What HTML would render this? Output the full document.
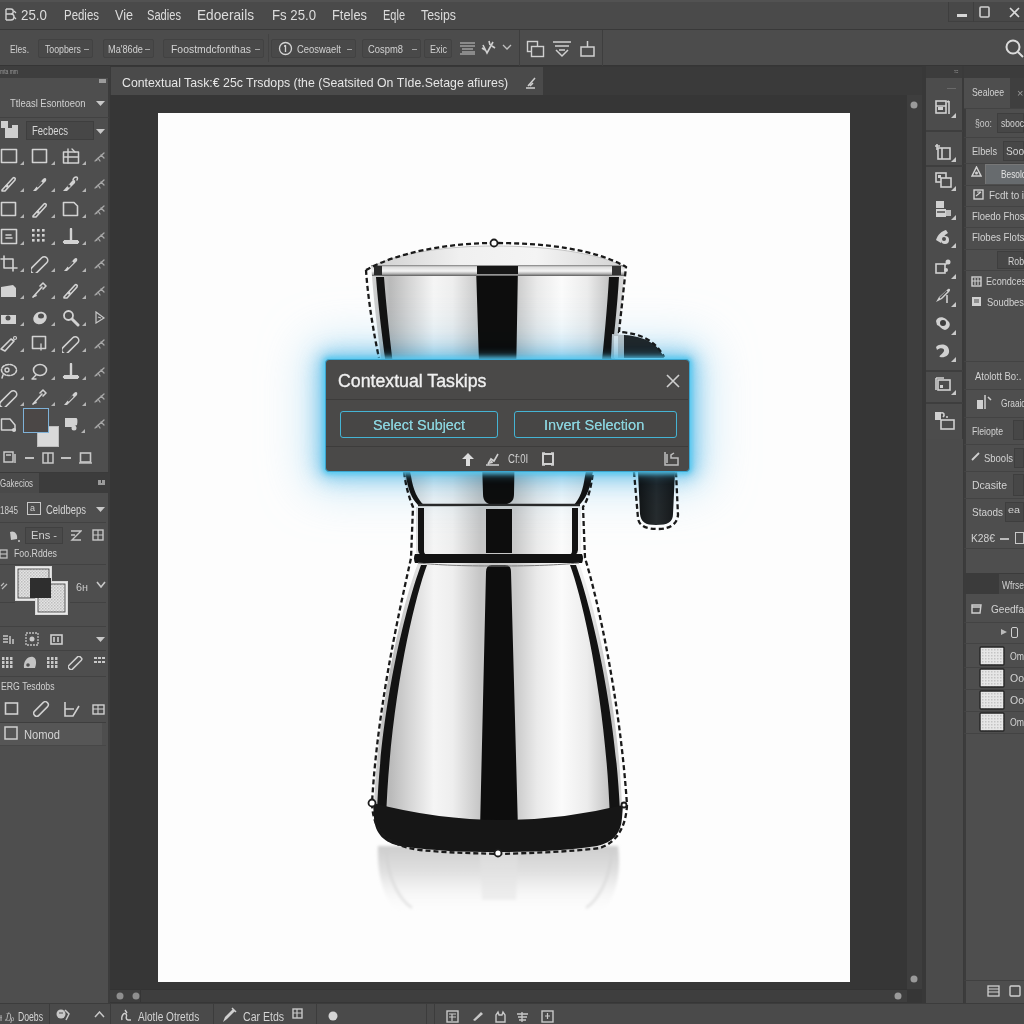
<!DOCTYPE html>
<html><head><meta charset="utf-8">
<style>

*{margin:0;padding:0;box-sizing:border-box}
html,body{width:1024px;height:1024px;overflow:hidden;background:#373737;font-family:"Liberation Sans",sans-serif;color:#dcdcdc}
.a{position:absolute}
.t{position:absolute;white-space:nowrap;line-height:1}
#menubar{left:0;top:0;width:1024px;height:30px;background:#4a4a4a;border-bottom:1px solid #393939}
#optbar{left:0;top:30px;width:1024px;height:36px;background:#4c4c4c;border-bottom:1px solid #353535}
#leftp{left:0;top:66px;width:110px;height:937px;background:#4e4e4e;border-right:2px solid #3c3c3c}
#tabbar{left:110px;top:67px;width:813px;height:28px;background:#3a3a3a}
#doctab{left:111px;top:67px;width:432px;height:28px;background:#4a4a4a}
#canvasarea{left:110px;top:95px;width:813px;height:908px;background:#363636}
#canvas{left:158px;top:113px;width:692px;height:869px;background:#fdfdfd;overflow:hidden}
#vscroll{left:907px;top:95px;width:15px;height:894px;background:#3e3e3e}
#hscroll{left:110px;top:989px;width:797px;height:13px;background:#3e3e3e;border-top:1px solid #333}
#iconcol{left:923px;top:66px;width:42px;height:937px;background:#3a3a3a}
#rightp{left:964px;top:66px;width:60px;height:937px;background:#4e4e4e;border-left:2px solid #3c3c3c}
#status{left:0;top:1003px;width:1024px;height:21px;background:#4a4a4a;border-top:1px solid #3c3c3c}
.mt{font-size:14.5px;color:#dedede;top:8px}
.ob{position:absolute;top:39px;height:19px;border:1px solid #3f3f3f;background:#4a4a4a;border-radius:2px}
.ot{font-size:11px;color:#d8d8d8;top:44px}
.sep{position:absolute;width:1px;background:#3a3a3a}
.hl{position:absolute;height:1px;background:#434343}

</style></head><body>
<div id="menubar" class="a"></div>
<div id="optbar" class="a"></div>
<div id="leftp" class="a"></div>
<div id="tabbar" class="a"></div>
<div id="canvasarea" class="a"></div>
<div id="doctab" class="a"></div>
<div id="canvas" class="a"></div>
<svg class="a" style="left:0;top:0" width="1024" height="1024" viewBox="0 0 1024 1024">
<defs>
<filter id="bl" x="-10%" y="-10%" width="120%" height="120%"><feGaussianBlur stdDeviation="1.5"/></filter>
<clipPath id="cv"><rect x="158" y="113" width="692" height="869"/></clipPath>
<linearGradient id="mL" gradientUnits="userSpaceOnUse" x1="370" x2="480" y1="0" y2="0">
<stop offset="0" stop-color="#d6d6d6"/>
<stop offset="0.18" stop-color="#b9b9b9"/>
<stop offset="0.35" stop-color="#d4d4d4"/>
<stop offset="0.58" stop-color="#f5f5f5"/>
<stop offset="0.75" stop-color="#eeeeee"/>
<stop offset="1" stop-color="#c6c6c6"/>
</linearGradient>
<linearGradient id="mR" gradientUnits="userSpaceOnUse" x1="515" x2="626" y1="0" y2="0">
<stop offset="0" stop-color="#c9c9c9"/>
<stop offset="0.2" stop-color="#eaeaea"/>
<stop offset="0.42" stop-color="#fbfbfb"/>
<stop offset="0.65" stop-color="#ececec"/>
<stop offset="0.85" stop-color="#c4c4c4"/>
<stop offset="1" stop-color="#dedede"/>
</linearGradient>
<linearGradient id="lid" x1="0" x2="1" y1="0" y2="0">
<stop offset="0" stop-color="#cfcfcf"/>
<stop offset="0.35" stop-color="#f0f0f0"/>
<stop offset="0.65" stop-color="#f4f4f4"/>
<stop offset="1" stop-color="#d2d2d2"/>
</linearGradient>
<linearGradient id="rim" x1="0" x2="0" y1="0" y2="1">
<stop offset="0" stop-color="#7a7a7a"/>
<stop offset="0.18" stop-color="#dcdcdc"/>
<stop offset="0.55" stop-color="#f4f4f4"/>
<stop offset="0.8" stop-color="#b0b0b0"/>
<stop offset="1" stop-color="#5a5a5a"/>
</linearGradient>
<linearGradient id="refl" x1="0" x2="0" y1="0" y2="1">
<stop offset="0" stop-color="#cdcdcd"/>
<stop offset="0.4" stop-color="#e2e2e2"/>
<stop offset="1" stop-color="#fdfdfd" stop-opacity="0"/>
</linearGradient>
<linearGradient id="hnd" x1="0" x2="1" y1="0" y2="0">
<stop offset="0" stop-color="#111416"/>
<stop offset="0.5" stop-color="#262b2e"/>
<stop offset="1" stop-color="#15181a"/>
</linearGradient>
<radialGradient id="halo" cx="0.5" cy="0.5" r="0.5">
<stop offset="0.55" stop-color="#9fdcf2" stop-opacity="0.55"/>
<stop offset="1" stop-color="#d8f1fa" stop-opacity="0"/>
</radialGradient>
</defs>
<g clip-path="url(#cv)">
<!-- reflection -->
<g filter="url(#bl)">
<path d="M378,846 L618,846 C622,875 615,900 600,915 L400,915 C383,900 377,875 378,846 Z" fill="url(#refl)"/>
<path d="M480,852 L518,852 L516,900 L482,900 Z" fill="#e4e4e4" opacity="0.5"/>
<path d="M386,850 C388,880 400,900 412,908" fill="none" stroke="#cfcfcf" stroke-width="2" opacity="0.7"/>
<path d="M612,850 C610,880 598,900 586,908" fill="none" stroke="#cfcfcf" stroke-width="2" opacity="0.7"/>
</g>
<!-- lid dome -->
<path d="M371,267 C400,252 450,246 494,246 C545,246 595,252 625,267 Z" fill="url(#lid)"/>
<path d="M371,267 C400,252 450,246 494,246 C545,246 595,252 625,267" fill="none" stroke="#c4c4c4" stroke-width="1"/>
<!-- upper chamber -->
<path d="M372,276 L498,276 L498,506 L420,506 C412,500 406,490 404,475 C390,430 376,330 372,276 Z" fill="url(#mL)"/>
<path d="M498,276 L624,276 C621,330 606,430 592,475 C590,490 586,500 578,506 L498,506 Z" fill="url(#mR)"/>
<path d="M376,277 L384,277 C388,330 400,430 411,476 C413,490 418,500 424,505 L418,505 C412,499 408,490 406,476 C394,430 380,330 376,277 Z" fill="#131313"/>
<path d="M609,277 L619,277 C616,330 604,430 592,476 C590,490 585,500 579,505 L574,505 C580,498 583,490 585,476 C596,430 606,330 609,277 Z" fill="#131313"/>
<path d="M476,266 L518,266 L514,494 C514,502 510,505 498,505 C487,505 483,502 483,494 Z" fill="#0d0d0d"/>
<!-- rim -->
<path d="M371,265 L625,265 L624,276 L372,276 Z" fill="url(#rim)"/>
<rect x="477" y="266" width="41" height="8" fill="#161616"/>
<rect x="374" y="266" width="8" height="9" fill="#2a2a2a"/>
<rect x="612" y="266" width="9" height="9" fill="#333"/>
<path d="M418,505 L580,505" stroke="#2a2a2a" stroke-width="2.5"/>
<!-- collar -->
<path d="M416,507 L498,507 L498,556 L420,556 Q416,556 416,551 Z" fill="url(#mL)"/>
<path d="M498,507 L581,507 L581,551 Q581,556 577,556 L498,556 Z" fill="url(#mR)"/>
<path d="M418,508 L424,508 L424,551 Q424,554 427,555 L421,555 Q418,553 418,550 Z" fill="#131313"/>
<path d="M572,508 L578,508 L578,550 Q578,553 575,555 L569,555 Q572,554 572,551 Z" fill="#131313"/>
<rect x="486" y="509" width="26" height="44" fill="#0d0d0d"/>
<path d="M415,554 L582,554 Q584,558 582,563 L415,563 Q413,558 415,554 Z" fill="#121212"/>
<!-- lower body -->
<path d="M418,563 L498,563 L498,830 L420,830 L374,812 L374,805 C378,700 404,600 418,563 Z" fill="url(#mL)"/>
<path d="M498,563 L579,563 C593,600 618,700 622,805 L622,812 L580,830 L498,830 Z" fill="url(#mR)"/>
<path d="M421,565 L427,565 C414,600 390,700 386,820 L377,812 C381,700 408,600 421,565 Z" fill="#131313"/>
<path d="M570,565 L576,565 C589,600 615,700 620,812 L610,820 C606,700 583,600 570,565 Z" fill="#131313"/>
<path d="M486,572 Q486,565 492,565 L505,565 Q511,565 511,572 L518,830 L480,830 Z" fill="#0d0d0d"/>
<path d="M418,563 C440,565 460,566 498,566 C536,566 556,565 579,563" fill="none" stroke="#7a7a7a" stroke-width="1"/>
<!-- base -->
<path d="M373,803 Q498,836 623,805 L622,818 C621,834 612,843 597,846 C565,851 530,852 498,852 C466,852 432,851 400,846 C385,843 375,834 374,818 Z" fill="#161616"/>

<!-- handle -->
<path d="M612,334 L624,335 L624,358 L611,358 Z" fill="#c9c9c9"/>
<path d="M614,336 L618,336 L618,358 L614,358 Z" fill="#eeeeee"/>
<path d="M624,335 C645,336 659,345 664,358 L624,358 Z" fill="#23292c"/>
<path d="M638,472 L675,472 L673,514 C673,522 668,525 656,525 C645,525 641,522 640,514 Z" fill="url(#hnd)"/>
<!-- selection -->
<g fill="none" stroke="#1a1a1a" stroke-width="2.3" stroke-dasharray="5 3">
<path d="M366,270 C398,252 450,243 494,243 C545,243 595,249 626,267 L619,332 C640,333 656,341 664,357"/>
<path d="M366,270 C368,300 374,335 379,358"/>
<path d="M404,472 C406,488 410,500 413,507 L411,558 C402,600 378,700 372,803 C373,830 385,845 420,850 C450,853 470,853 498,854 C530,853 570,852 600,848 C618,842 626,825 627,805 C620,700 598,600 585,558 L583,507 C588,500 591,488 593,472"/>
<path d="M634,472 L638,518 C639,527 648,529 658,529 C670,529 677,524 678,515 L676,472"/>
</g>
<g fill="#fff" stroke="#1c1c1c" stroke-width="1.8">
<circle cx="494" cy="243" r="3.5"/>
<circle cx="372" cy="803" r="3.5"/>
<circle cx="498" cy="853" r="3.5"/>
<circle cx="624" cy="805" r="2.5"/>
</g>
</g>
</svg>

<div class="a" style="left:325px;top:359px;width:365px;height:113px;border-radius:6px;box-shadow:0 0 20px 8px rgba(110,195,235,0.75),0 0 46px 18px rgba(175,222,245,0.6);mix-blend-mode:multiply"></div>
<div id="dlg" class="a" style="left:325px;top:359px;width:365px;height:113px;background:#4a4948;border:1.5px solid #3aa6d0;border-radius:4px;box-shadow:0 0 4px 2px rgba(80,200,240,0.85),0 0 10px 3px rgba(100,200,240,0.45)">
<div class="t" style="left:12px;top:11.5px;font-size:18px;color:#f0f0f0;-webkit-text-stroke:0.35px #f0f0f0;transform:scaleX(0.985);transform-origin:0 0">Contextual Taskips</div>
<svg class="a" style="left:340px;top:14px" width="14" height="14" viewBox="0 0 14 14"><path d="M1,1 L13,13 M13,1 L1,13" stroke="#cfcfcf" stroke-width="1.6"/></svg>
<div class="a" style="left:0;top:39px;width:362px;height:1px;background:#3d3c3b"></div>
<div class="a" style="left:14px;top:51px;width:158px;height:27px;border:1.7px solid #45b4d4;border-radius:3px;background:#474645"></div>
<div class="t" style="left:47px;top:57px;font-size:15px;color:#8ad2dc;transform:scaleX(0.96);transform-origin:0 0;text-shadow:0 0 0.4px #8ad2dc">Select Subject</div>
<div class="a" style="left:188px;top:51px;width:163px;height:27px;border:1.7px solid #45b4d4;border-radius:3px;background:#474645"></div>
<div class="t" style="left:218px;top:57px;font-size:15px;color:#8ad2dc;transform:scaleX(0.97);transform-origin:0 0;text-shadow:0 0 0.4px #8ad2dc">Invert Selection</div>
<div class="a" style="left:0;top:86px;width:362px;height:1px;background:#3d3c3b"></div>
<svg class="a" style="left:135px;top:92px" width="14" height="15" viewBox="0 0 14 15"><path d="M7,1 L13,7 H9 V14 H5 V7 H1 Z" fill="#dcdcdc"/></svg>
<svg class="a" style="left:159px;top:92px" width="15" height="15" viewBox="0 0 15 15"><path d="M1,13 H14 M3,12 L6,7 L9,9 L13,2" fill="none" stroke="#cfcfcf" stroke-width="1.6"/><path d="M3,12 L7,8 L8,11 Z" fill="#cfcfcf"/></svg>
<div class="t" style="left:182px;top:93px;font-size:12px;color:#cfcfcf;transform:scaleX(0.8);transform-origin:0 0">Cf:0I</div>
<svg class="a" style="left:215px;top:92px" width="14" height="14" viewBox="0 0 14 14"><rect x="2" y="2" width="10" height="10" fill="none" stroke="#d0d0d0" stroke-width="2"/><path d="M1,1 H4 M10,1 H13 M1,13 H4 M10,13 H13" stroke="#d0d0d0" stroke-width="1.5"/></svg>
<svg class="a" style="left:337px;top:91px" width="16" height="15" viewBox="0 0 16 15"><path d="M2,1 V14 H15 V7 H8 V4 L11,2 M4,3 V12" fill="none" stroke="#bdbdbd" stroke-width="1.5"/></svg>
</div>

<div id="vscroll" class="a"></div>
<div id="hscroll" class="a"></div>
<div id="iconcol" class="a"></div>
<div id="rightp" class="a"></div>
<div id="status" class="a"></div>
<div class="a" style="left:0px;top:0px;width:1024px;height:2px;background:#525252;"></div>
<svg class="a" style="left:4px;top:8px;" width="13" height="14" viewBox="0 0 13 14"><path d="M2,1 L2,12 M2,1 L7,1 C10,1 10,6 7,6 L2,6 M7,6 C11,6 11,12 7,12 L2,12" fill="none" stroke="#d0d0d0" stroke-width="1.4"/><path d="M10,3 L12,5 M10,9 L12,11" stroke="#d0d0d0" stroke-width="1.2"/></svg>
<div class="t" style="left:21.0px;top:7.7px;font-size:14.5px;color:#dcdcdc;transform:scaleX(0.921);transform-origin:0 0;">25.0</div>
<div class="t" style="left:64.0px;top:7.7px;font-size:14.5px;color:#dcdcdc;transform:scaleX(0.789);transform-origin:0 0;">Pedies</div>
<div class="t" style="left:115.0px;top:7.7px;font-size:14.5px;color:#dcdcdc;transform:scaleX(0.870);transform-origin:0 0;">Vie</div>
<div class="t" style="left:147.0px;top:7.7px;font-size:14.5px;color:#dcdcdc;transform:scaleX(0.767);transform-origin:0 0;">Sadies</div>
<div class="t" style="left:197.0px;top:7.7px;font-size:14.5px;color:#dcdcdc;transform:scaleX(0.943);transform-origin:0 0;">Edoerails</div>
<div class="t" style="left:272.0px;top:7.7px;font-size:14.5px;color:#dcdcdc;transform:scaleX(0.910);transform-origin:0 0;">Fs 25.0</div>
<div class="t" style="left:332.0px;top:7.7px;font-size:14.5px;color:#dcdcdc;transform:scaleX(0.886);transform-origin:0 0;">Fteles</div>
<div class="t" style="left:383.0px;top:7.7px;font-size:14.5px;color:#dcdcdc;transform:scaleX(0.758);transform-origin:0 0;">Eqle</div>
<div class="t" style="left:421.0px;top:7.7px;font-size:14.5px;color:#dcdcdc;transform:scaleX(0.852);transform-origin:0 0;">Tesips</div>
<div class="a" style="left:948px;top:2px;width:76px;height:20px;background:#484848;border-bottom:1px solid #404040"></div>
<div class="a" style="left:948px;top:2px;width:1px;height:20px;background:#3e3e3e;"></div>
<div class="a" style="left:973px;top:2px;width:1px;height:20px;background:#3e3e3e;"></div>
<div class="a" style="left:957px;top:14px;width:10px;height:3px;background:#d6d6d6;"></div>
<svg class="a" style="left:978px;top:5px;" width="14" height="14" viewBox="0 0 14 14"><rect x="2" y="2" width="9" height="10" fill="none" stroke="#d0d0d0" stroke-width="1.6" rx="1"/></svg>
<svg class="a" style="left:1008px;top:6px;" width="14" height="14" viewBox="0 0 14 14"><path d="M2,2 L11,11 M11,2 L2,11" stroke="#dadada" stroke-width="1.6"/></svg>
<div class="t" style="left:10.0px;top:43.7px;font-size:11.0px;color:#d0d0d0;transform:scaleX(0.777);transform-origin:0 0;">Eles.</div>
<div class="a" style="left:38px;top:39px;width:55px;height:19px;background:#494949;border:1px solid #424242;border-radius:2px;"></div>
<div class="t" style="left:45.0px;top:43.5px;font-size:11.2px;color:#d2d2d2;transform:scaleX(0.781);transform-origin:0 0;">Toopbers</div>
<div class="a" style="left:84px;top:48.5px;width:5px;height:1.2px;background:#a8a8a8;"></div>
<div class="a" style="left:103px;top:39px;width:51px;height:19px;background:#494949;border:1px solid #424242;border-radius:2px;"></div>
<div class="t" style="left:108.0px;top:43.5px;font-size:11.2px;color:#d2d2d2;transform:scaleX(0.821);transform-origin:0 0;">Ma'86de</div>
<div class="a" style="left:145px;top:48.5px;width:5px;height:1.2px;background:#a8a8a8;"></div>
<div class="a" style="left:163px;top:39px;width:101px;height:19px;background:#494949;border:1px solid #424242;border-radius:2px;"></div>
<div class="t" style="left:171.0px;top:43.5px;font-size:11.2px;color:#d2d2d2;transform:scaleX(0.931);transform-origin:0 0;">Foostmdcfonthas</div>
<div class="a" style="left:255px;top:48.5px;width:5px;height:1.2px;background:#a8a8a8;"></div>
<div class="a" style="left:268px;top:34px;width:1px;height:28px;background:#434343;"></div>
<div class="a" style="left:271px;top:39px;width:85px;height:19px;background:#494949;border:1px solid #424242;border-radius:2px;"></div>
<div class="t" style="left:297.0px;top:43.5px;font-size:11.2px;color:#d2d2d2;transform:scaleX(0.841);transform-origin:0 0;">Ceoswaelt</div>
<div class="a" style="left:347px;top:48.5px;width:5px;height:1.2px;background:#a8a8a8;"></div>
<svg class="a" style="left:278px;top:41px;" width="15" height="15" viewBox="0 0 15 15"><circle cx="7.5" cy="7.5" r="6" fill="none" stroke="#d4d4d4" stroke-width="1.3"/><path d="M7.5,4 L7.5,11 M6,5 L8,5" stroke="#d4d4d4" stroke-width="1.3"/></svg>
<div class="a" style="left:362px;top:39px;width:59px;height:19px;background:#494949;border:1px solid #424242;border-radius:2px;"></div>
<div class="t" style="left:368.0px;top:43.5px;font-size:11.2px;color:#d2d2d2;transform:scaleX(0.839);transform-origin:0 0;">Cospm8</div>
<div class="a" style="left:412px;top:48.5px;width:5px;height:1.2px;background:#a8a8a8;"></div>
<div class="a" style="left:424px;top:39px;width:28px;height:19px;background:#494949;border:1px solid #424242;border-radius:2px;"></div>
<div class="t" style="left:430.0px;top:43.5px;font-size:11.2px;color:#d2d2d2;transform:scaleX(0.803);transform-origin:0 0;">Exic</div>
<svg class="a" style="left:459px;top:41px;" width="17" height="15" viewBox="0 0 17 15"><path d="M1,2 H16 M1,5 H16 M3,8 H14 M3,11 H16 M1,13 H16" stroke="#c8c8c8" stroke-width="1.2"/></svg>
<svg class="a" style="left:480px;top:39px;" width="16" height="17" viewBox="0 0 16 17"><path d="M3,6 L7,14 L13,3 M9,2 L10,6 M12,7 L15,9 M2,9 L5,11" stroke="#d0d0d0" stroke-width="1.6" fill="none"/></svg>
<svg class="a" style="left:502px;top:44px;" width="10" height="7" viewBox="0 0 10 7"><path d="M1,1 L5,5 L9,1" stroke="#c0c0c0" stroke-width="1.3" fill="none"/></svg>
<div class="a" style="left:519px;top:30px;width:1px;height:36px;background:#3e3e3e;"></div>
<svg class="a" style="left:526px;top:40px;" width="19" height="18" viewBox="0 0 19 18"><rect x="1.5" y="1.5" width="10" height="10" fill="none" stroke="#d0d0d0" stroke-width="1.4"/><rect x="5.5" y="6.5" width="12" height="10" fill="#4c4c4c" stroke="#d0d0d0" stroke-width="1.4"/></svg>
<svg class="a" style="left:552px;top:40px;" width="20" height="18" viewBox="0 0 20 18"><path d="M1,2 H19 M3,6 H17 M4,10 L10,16 L16,10 M7,10 H13" stroke="#d0d0d0" stroke-width="1.5" fill="none"/></svg>
<svg class="a" style="left:579px;top:39px;" width="17" height="19" viewBox="0 0 17 19"><rect x="2" y="8" width="13" height="9" fill="none" stroke="#d0d0d0" stroke-width="1.5"/><path d="M8.5,2 V8" stroke="#d0d0d0" stroke-width="1.5"/></svg>
<div class="a" style="left:602px;top:30px;width:1px;height:36px;background:#3e3e3e;"></div>
<svg class="a" style="left:1003px;top:37px;" width="21" height="22" viewBox="0 0 21 22"><circle cx="10" cy="10" r="6.5" fill="none" stroke="#dcdcdc" stroke-width="2"/><path d="M15,15 L20,20" stroke="#dcdcdc" stroke-width="2"/></svg>
<div class="t" style="left:122.0px;top:75.6px;font-size:13.5px;color:#e6e6e6;transform:scaleX(0.912);transform-origin:0 0;">Contextual Task:€ 25c Trsdops (the (Seatsited On TIde.Setage afiures)</div>
<svg class="a" style="left:524px;top:76px;" width="14" height="14" viewBox="0 0 14 14"><path d="M2,12 H11 M4,10 L11,2 M6,10 L9,7" stroke="#cfcfcf" stroke-width="1.5" fill="none"/></svg>

<div class="a" style="left:0px;top:66px;width:110px;height:12px;background:#3e3e3e;"></div>
<div class="t" style="left:0.0px;top:68.2px;font-size:8.0px;color:#9a9a9a;transform:scaleX(0.623);transform-origin:0 0;">mta mm</div>
<svg class="a" style="left:99px;top:79px;" width="8" height="6" viewBox="0 0 8 6"><rect x="0" y="0" width="7" height="4" fill="#9c9c9c"/></svg>
<div class="t" style="left:10.0px;top:98.3px;font-size:11.5px;color:#d0d0d0;transform:scaleX(0.819);transform-origin:0 0;">Ttleasl  Esontoeon</div>
<svg class="a" style="left:96px;top:101px;" width="9" height="6" viewBox="0 0 9 6"><path d="M0,0 L9,0 L4.5,5 Z" fill="#c8c8c8"/></svg>
<div class="a" style="left:0px;top:117px;width:109px;height:1px;background:#424242;"></div>
<svg class="a" style="left:1px;top:121px;" width="18" height="18" viewBox="0 0 18 18"><rect x="0" y="0" width="7" height="7" fill="#cfcfcf"/><path d="M4,7 H11 V4 H17 V17 H4 Z" fill="#cfcfcf"/><rect x="7" y="4" width="4" height="3" fill="#4e4e4e"/></svg>
<div class="a" style="left:26px;top:121px;width:68px;height:19px;background:#474747;border:1px solid #3e3e3e;"></div>
<div class="t" style="left:32.0px;top:124.8px;font-size:12.0px;color:#d6d6d6;transform:scaleX(0.794);transform-origin:0 0;">Fecbecs</div>
<svg class="a" style="left:96px;top:129px;" width="9" height="6" viewBox="0 0 9 6"><path d="M0,0 L9,0 L4.5,5 Z" fill="#c8c8c8"/></svg>
<svg class="a" style="left:0px;top:148px;" width="18" height="18" viewBox="0 0 18 18"><rect x="1.5" y="1.5" width="15" height="13" fill="none" stroke="#d2d2d2" stroke-width="1.6" stroke-linejoin="round" stroke-linecap="round"/></svg>
<svg class="a" style="left:19px;top:160px;" width="5" height="5" viewBox="0 0 5 5"><path d="M1,5 L5,1 L5,5 Z" fill="#b4b4b4"/></svg>
<svg class="a" style="left:31px;top:148px;" width="18" height="18" viewBox="0 0 18 18"><rect x="1.5" y="1.5" width="14" height="13" fill="none" stroke="#d2d2d2" stroke-width="1.6" stroke-linejoin="round" stroke-linecap="round"/></svg>
<svg class="a" style="left:50px;top:160px;" width="5" height="5" viewBox="0 0 5 5"><path d="M1,5 L5,1 L5,5 Z" fill="#b4b4b4"/></svg>
<svg class="a" style="left:62px;top:148px;" width="18" height="18" viewBox="0 0 18 18"><rect x="1.5" y="4" width="15" height="11" fill="none" stroke="#d2d2d2" stroke-width="1.5" stroke-linejoin="round" stroke-linecap="round"/><path d="M6,1 V15 M1.5,9 H16.5 M10,1 L13,4" fill="none" stroke="#d2d2d2" stroke-width="1.4" stroke-linejoin="round" stroke-linecap="round"/></svg>
<svg class="a" style="left:81px;top:160px;" width="5" height="5" viewBox="0 0 5 5"><path d="M1,5 L5,1 L5,5 Z" fill="#b4b4b4"/></svg>
<svg class="a" style="left:94px;top:150px;" width="12" height="13" viewBox="0 0 12 13"><path d="M2,10 L10,3 M4,8 L6,11 M7,5 L10,8 M1,11 L3,10" fill="none" stroke="#a8a8a8" stroke-width="1.3" stroke-linejoin="round" stroke-linecap="round"/></svg>
<svg class="a" style="left:0px;top:175px;" width="18" height="18" viewBox="0 0 18 18"><path d="M2,15 L13,3 C14,2 16,3 15,5 L5,16 L2,16 Z" fill="none" stroke="#d2d2d2" stroke-width="1.6" stroke-linejoin="round" stroke-linecap="round"/><circle cx="7" cy="11" r="1.6" fill="#d2d2d2"/></svg>
<svg class="a" style="left:19px;top:187px;" width="5" height="5" viewBox="0 0 5 5"><path d="M1,5 L5,1 L5,5 Z" fill="#b4b4b4"/></svg>
<svg class="a" style="left:31px;top:175px;" width="18" height="18" viewBox="0 0 18 18"><path d="M2,16 L12,4 C14,2 16,3 15,6 L5,16 Z" fill="#d2d2d2"/><path d="M6,12 L11,7" stroke="#4e4e4e" stroke-width="2"/></svg>
<svg class="a" style="left:50px;top:187px;" width="5" height="5" viewBox="0 0 5 5"><path d="M1,5 L5,1 L5,5 Z" fill="#b4b4b4"/></svg>
<svg class="a" style="left:62px;top:175px;" width="18" height="18" viewBox="0 0 18 18"><path d="M1,16 L10,6 C12,4 14,5 13,8 L5,16 Z" fill="#d2d2d2"/><path d="M11,5 C12,1 17,1 15,5" fill="none" stroke="#d2d2d2" stroke-width="1.5" stroke-linejoin="round" stroke-linecap="round"/><circle cx="7" cy="11" r="1.5" fill="#4e4e4e"/></svg>
<svg class="a" style="left:81px;top:187px;" width="5" height="5" viewBox="0 0 5 5"><path d="M1,5 L5,1 L5,5 Z" fill="#b4b4b4"/></svg>
<svg class="a" style="left:94px;top:177px;" width="12" height="13" viewBox="0 0 12 13"><path d="M2,10 L10,3 M4,8 L6,11 M7,5 L10,8 M1,11 L3,10" fill="none" stroke="#a8a8a8" stroke-width="1.3" stroke-linejoin="round" stroke-linecap="round"/></svg>
<svg class="a" style="left:0px;top:201px;" width="18" height="18" viewBox="0 0 18 18"><rect x="1.5" y="1.5" width="14" height="13" fill="none" stroke="#d2d2d2" stroke-width="1.6" stroke-linejoin="round" stroke-linecap="round"/></svg>
<svg class="a" style="left:19px;top:213px;" width="5" height="5" viewBox="0 0 5 5"><path d="M1,5 L5,1 L5,5 Z" fill="#b4b4b4"/></svg>
<svg class="a" style="left:31px;top:201px;" width="18" height="18" viewBox="0 0 18 18"><path d="M2,15 L13,3 C14,2 16,3 15,5 L5,16 L2,16 Z" fill="none" stroke="#d2d2d2" stroke-width="1.6" stroke-linejoin="round" stroke-linecap="round"/><circle cx="7" cy="11" r="1.6" fill="#d2d2d2"/></svg>
<svg class="a" style="left:50px;top:213px;" width="5" height="5" viewBox="0 0 5 5"><path d="M1,5 L5,1 L5,5 Z" fill="#b4b4b4"/></svg>
<svg class="a" style="left:62px;top:201px;" width="18" height="18" viewBox="0 0 18 18"><path d="M1.5,1.5 H12 L15.5,5 V14.5 H1.5 Z" fill="none" stroke="#d2d2d2" stroke-width="1.6" stroke-linejoin="round" stroke-linecap="round"/></svg>
<svg class="a" style="left:81px;top:213px;" width="5" height="5" viewBox="0 0 5 5"><path d="M1,5 L5,1 L5,5 Z" fill="#b4b4b4"/></svg>
<svg class="a" style="left:94px;top:203px;" width="12" height="13" viewBox="0 0 12 13"><path d="M2,10 L10,3 M4,8 L6,11 M7,5 L10,8 M1,11 L3,10" fill="none" stroke="#a8a8a8" stroke-width="1.3" stroke-linejoin="round" stroke-linecap="round"/></svg>
<svg class="a" style="left:0px;top:228px;" width="18" height="18" viewBox="0 0 18 18"><rect x="1.5" y="1.5" width="15" height="14" fill="none" stroke="#d2d2d2" stroke-width="1.6" stroke-linejoin="round" stroke-linecap="round"/><path d="M6,7 H11 M6,10 H12" fill="none" stroke="#d2d2d2" stroke-width="1.6" stroke-linejoin="round" stroke-linecap="round"/></svg>
<svg class="a" style="left:19px;top:240px;" width="5" height="5" viewBox="0 0 5 5"><path d="M1,5 L5,1 L5,5 Z" fill="#b4b4b4"/></svg>
<svg class="a" style="left:31px;top:228px;" width="18" height="18" viewBox="0 0 18 18"><rect x="1" y="1" width="2.6" height="2.6" fill="#d2d2d2"/><rect x="1" y="6" width="2.6" height="2.6" fill="#d2d2d2"/><rect x="1" y="11" width="2.6" height="2.6" fill="#d2d2d2"/><rect x="6" y="1" width="2.6" height="2.6" fill="#d2d2d2"/><rect x="6" y="6" width="2.6" height="2.6" fill="#d2d2d2"/><rect x="6" y="11" width="2.6" height="2.6" fill="#d2d2d2"/><rect x="11" y="1" width="2.6" height="2.6" fill="#d2d2d2"/><rect x="11" y="6" width="2.6" height="2.6" fill="#d2d2d2"/><rect x="11" y="11" width="2.6" height="2.6" fill="#d2d2d2"/></svg>
<svg class="a" style="left:50px;top:240px;" width="5" height="5" viewBox="0 0 5 5"><path d="M1,5 L5,1 L5,5 Z" fill="#b4b4b4"/></svg>
<svg class="a" style="left:62px;top:228px;" width="18" height="18" viewBox="0 0 18 18"><path d="M9,1 V12 M2,14 H16" fill="none" stroke="#d2d2d2" stroke-width="2.4" stroke-linejoin="round" stroke-linecap="round"/><rect x="2" y="12" width="14" height="4" fill="#d2d2d2"/></svg>
<svg class="a" style="left:81px;top:240px;" width="5" height="5" viewBox="0 0 5 5"><path d="M1,5 L5,1 L5,5 Z" fill="#b4b4b4"/></svg>
<svg class="a" style="left:94px;top:230px;" width="12" height="13" viewBox="0 0 12 13"><path d="M2,10 L10,3 M4,8 L6,11 M7,5 L10,8 M1,11 L3,10" fill="none" stroke="#a8a8a8" stroke-width="1.3" stroke-linejoin="round" stroke-linecap="round"/></svg>
<svg class="a" style="left:0px;top:255px;" width="18" height="18" viewBox="0 0 18 18"><path d="M4,1 V13 H17 M1,4 H13 V16" fill="none" stroke="#d2d2d2" stroke-width="1.6" stroke-linejoin="round" stroke-linecap="round"/></svg>
<svg class="a" style="left:19px;top:267px;" width="5" height="5" viewBox="0 0 5 5"><path d="M1,5 L5,1 L5,5 Z" fill="#b4b4b4"/></svg>
<svg class="a" style="left:31px;top:255px;" width="18" height="18" viewBox="0 0 18 18"><rect x="-2.5" y="6" width="21" height="7" rx="3.5" transform="rotate(-45 9 9.5)" fill="none" stroke="#d2d2d2" stroke-width="1.6" stroke-linejoin="round" stroke-linecap="round"/></svg>
<svg class="a" style="left:50px;top:267px;" width="5" height="5" viewBox="0 0 5 5"><path d="M1,5 L5,1 L5,5 Z" fill="#b4b4b4"/></svg>
<svg class="a" style="left:62px;top:255px;" width="18" height="18" viewBox="0 0 18 18"><path d="M2,16 L12,4 C14,2 16,3 15,6 L5,16 Z" fill="#d2d2d2"/><path d="M6,12 L11,7" stroke="#4e4e4e" stroke-width="2"/></svg>
<svg class="a" style="left:81px;top:267px;" width="5" height="5" viewBox="0 0 5 5"><path d="M1,5 L5,1 L5,5 Z" fill="#b4b4b4"/></svg>
<svg class="a" style="left:94px;top:257px;" width="12" height="13" viewBox="0 0 12 13"><path d="M2,10 L10,3 M4,8 L6,11 M7,5 L10,8 M1,11 L3,10" fill="none" stroke="#a8a8a8" stroke-width="1.3" stroke-linejoin="round" stroke-linecap="round"/></svg>
<svg class="a" style="left:0px;top:282px;" width="18" height="18" viewBox="0 0 18 18"><path d="M1,5 L13,3 L16,6 L16,15 L1,15 Z" fill="#d2d2d2"/></svg>
<svg class="a" style="left:19px;top:294px;" width="5" height="5" viewBox="0 0 5 5"><path d="M1,5 L5,1 L5,5 Z" fill="#b4b4b4"/></svg>
<svg class="a" style="left:31px;top:282px;" width="18" height="18" viewBox="0 0 18 18"><path d="M2,15 L11,5 M9,4 L12,1 L15,4 L12,7" fill="none" stroke="#d2d2d2" stroke-width="1.6" stroke-linejoin="round" stroke-linecap="round"/><path d="M1,16 L5,12 L6,14 Z" fill="#d2d2d2"/></svg>
<svg class="a" style="left:50px;top:294px;" width="5" height="5" viewBox="0 0 5 5"><path d="M1,5 L5,1 L5,5 Z" fill="#b4b4b4"/></svg>
<svg class="a" style="left:62px;top:282px;" width="18" height="18" viewBox="0 0 18 18"><path d="M2,15 L13,3 C14,2 16,3 15,5 L5,16 L2,16 Z" fill="none" stroke="#d2d2d2" stroke-width="1.6" stroke-linejoin="round" stroke-linecap="round"/><circle cx="7" cy="11" r="1.6" fill="#d2d2d2"/></svg>
<svg class="a" style="left:81px;top:294px;" width="5" height="5" viewBox="0 0 5 5"><path d="M1,5 L5,1 L5,5 Z" fill="#b4b4b4"/></svg>
<svg class="a" style="left:94px;top:284px;" width="12" height="13" viewBox="0 0 12 13"><path d="M2,10 L10,3 M4,8 L6,11 M7,5 L10,8 M1,11 L3,10" fill="none" stroke="#a8a8a8" stroke-width="1.3" stroke-linejoin="round" stroke-linecap="round"/></svg>
<svg class="a" style="left:0px;top:309px;" width="18" height="18" viewBox="0 0 18 18"><path d="M1,6 H16 V15 H1 Z" fill="#d2d2d2"/><circle cx="8" cy="9" r="2.5" fill="#4e4e4e"/></svg>
<svg class="a" style="left:19px;top:321px;" width="5" height="5" viewBox="0 0 5 5"><path d="M1,5 L5,1 L5,5 Z" fill="#b4b4b4"/></svg>
<svg class="a" style="left:31px;top:309px;" width="18" height="18" viewBox="0 0 18 18"><ellipse cx="9" cy="9" rx="7" ry="6" fill="#d2d2d2" transform="rotate(-35 9 9)"/><ellipse cx="10" cy="7" rx="3" ry="2.5" fill="#4e4e4e"/></svg>
<svg class="a" style="left:50px;top:321px;" width="5" height="5" viewBox="0 0 5 5"><path d="M1,5 L5,1 L5,5 Z" fill="#b4b4b4"/></svg>
<svg class="a" style="left:62px;top:309px;" width="18" height="18" viewBox="0 0 18 18"><circle cx="6.5" cy="6.5" r="4.5" fill="none" stroke="#d2d2d2" stroke-width="1.8" stroke-linejoin="round" stroke-linecap="round"/><path d="M10,10 L16,16" fill="none" stroke="#d2d2d2" stroke-width="3" stroke-linejoin="round" stroke-linecap="round"/></svg>
<svg class="a" style="left:81px;top:321px;" width="5" height="5" viewBox="0 0 5 5"><path d="M1,5 L5,1 L5,5 Z" fill="#b4b4b4"/></svg>
<svg class="a" style="left:94px;top:311px;" width="12" height="13" viewBox="0 0 12 13"><path d="M2,12 L2,1 L10,7 Z M4,6 L7,7" fill="none" stroke="#c8c8c8" stroke-width="1.2"/></svg>
<svg class="a" style="left:0px;top:335px;" width="18" height="18" viewBox="0 0 18 18"><path d="M1,14 L11,4 L14,6 L5,16 Z" fill="none" stroke="#d2d2d2" stroke-width="1.6" stroke-linejoin="round" stroke-linecap="round"/><circle cx="15" cy="3" r="1.5" fill="none" stroke="#d2d2d2" stroke-width="1.2" stroke-linejoin="round" stroke-linecap="round"/></svg>
<svg class="a" style="left:19px;top:347px;" width="5" height="5" viewBox="0 0 5 5"><path d="M1,5 L5,1 L5,5 Z" fill="#b4b4b4"/></svg>
<svg class="a" style="left:31px;top:335px;" width="18" height="18" viewBox="0 0 18 18"><rect x="1.5" y="1.5" width="13" height="12" fill="none" stroke="#d2d2d2" stroke-width="1.6" stroke-linejoin="round" stroke-linecap="round"/><path d="M10,9 V15" fill="none" stroke="#d2d2d2" stroke-width="1.3" stroke-linejoin="round" stroke-linecap="round"/></svg>
<svg class="a" style="left:50px;top:347px;" width="5" height="5" viewBox="0 0 5 5"><path d="M1,5 L5,1 L5,5 Z" fill="#b4b4b4"/></svg>
<svg class="a" style="left:62px;top:335px;" width="18" height="18" viewBox="0 0 18 18"><rect x="-2.5" y="6" width="21" height="7" rx="3.5" transform="rotate(-45 9 9.5)" fill="none" stroke="#d2d2d2" stroke-width="1.6" stroke-linejoin="round" stroke-linecap="round"/></svg>
<svg class="a" style="left:81px;top:347px;" width="5" height="5" viewBox="0 0 5 5"><path d="M1,5 L5,1 L5,5 Z" fill="#b4b4b4"/></svg>
<svg class="a" style="left:94px;top:337px;" width="12" height="13" viewBox="0 0 12 13"><path d="M2,10 L10,3 M4,8 L6,11 M7,5 L10,8 M1,11 L3,10" fill="none" stroke="#a8a8a8" stroke-width="1.3" stroke-linejoin="round" stroke-linecap="round"/></svg>
<svg class="a" style="left:0px;top:363px;" width="18" height="18" viewBox="0 0 18 18"><ellipse cx="9" cy="7" rx="7.5" ry="5.5" fill="none" stroke="#d2d2d2" stroke-width="1.6" stroke-linejoin="round" stroke-linecap="round" stroke-dasharray="3 1.5"/><circle cx="7" cy="7" r="2" fill="none" stroke="#d2d2d2" stroke-width="1.4" stroke-linejoin="round" stroke-linecap="round"/><path d="M3,12 L2,15" fill="none" stroke="#d2d2d2" stroke-width="1.5" stroke-linejoin="round" stroke-linecap="round"/></svg>
<svg class="a" style="left:19px;top:375px;" width="5" height="5" viewBox="0 0 5 5"><path d="M1,5 L5,1 L5,5 Z" fill="#b4b4b4"/></svg>
<svg class="a" style="left:31px;top:363px;" width="18" height="18" viewBox="0 0 18 18"><ellipse cx="9" cy="7" rx="6.5" ry="5.5" fill="none" stroke="#d2d2d2" stroke-width="1.6" stroke-linejoin="round" stroke-linecap="round"/><path d="M5,12 C3,14 2,15 1,16 H5" fill="none" stroke="#d2d2d2" stroke-width="1.4" stroke-linejoin="round" stroke-linecap="round"/></svg>
<svg class="a" style="left:50px;top:375px;" width="5" height="5" viewBox="0 0 5 5"><path d="M1,5 L5,1 L5,5 Z" fill="#b4b4b4"/></svg>
<svg class="a" style="left:62px;top:363px;" width="18" height="18" viewBox="0 0 18 18"><path d="M9,1 V12 M2,14 H16" fill="none" stroke="#d2d2d2" stroke-width="2.4" stroke-linejoin="round" stroke-linecap="round"/><rect x="2" y="12" width="14" height="4" fill="#d2d2d2"/></svg>
<svg class="a" style="left:81px;top:375px;" width="5" height="5" viewBox="0 0 5 5"><path d="M1,5 L5,1 L5,5 Z" fill="#b4b4b4"/></svg>
<svg class="a" style="left:94px;top:365px;" width="12" height="13" viewBox="0 0 12 13"><path d="M2,10 L10,3 M4,8 L6,11 M7,5 L10,8 M1,11 L3,10" fill="none" stroke="#a8a8a8" stroke-width="1.3" stroke-linejoin="round" stroke-linecap="round"/></svg>
<svg class="a" style="left:0px;top:389px;" width="18" height="18" viewBox="0 0 18 18"><rect x="-2.5" y="6" width="21" height="7" rx="3.5" transform="rotate(-45 9 9.5)" fill="none" stroke="#d2d2d2" stroke-width="1.6" stroke-linejoin="round" stroke-linecap="round"/></svg>
<svg class="a" style="left:19px;top:401px;" width="5" height="5" viewBox="0 0 5 5"><path d="M1,5 L5,1 L5,5 Z" fill="#b4b4b4"/></svg>
<svg class="a" style="left:31px;top:389px;" width="18" height="18" viewBox="0 0 18 18"><path d="M2,15 L11,5 M9,4 L12,1 L15,4 L12,7" fill="none" stroke="#d2d2d2" stroke-width="1.6" stroke-linejoin="round" stroke-linecap="round"/><path d="M1,16 L5,12 L6,14 Z" fill="#d2d2d2"/></svg>
<svg class="a" style="left:50px;top:401px;" width="5" height="5" viewBox="0 0 5 5"><path d="M1,5 L5,1 L5,5 Z" fill="#b4b4b4"/></svg>
<svg class="a" style="left:62px;top:389px;" width="18" height="18" viewBox="0 0 18 18"><path d="M2,16 L12,4 C14,2 16,3 15,6 L5,16 Z" fill="#d2d2d2"/><path d="M6,12 L11,7" stroke="#4e4e4e" stroke-width="2"/></svg>
<svg class="a" style="left:81px;top:401px;" width="5" height="5" viewBox="0 0 5 5"><path d="M1,5 L5,1 L5,5 Z" fill="#b4b4b4"/></svg>
<svg class="a" style="left:94px;top:391px;" width="12" height="13" viewBox="0 0 12 13"><path d="M2,10 L10,3 M4,8 L6,11 M7,5 L10,8 M1,11 L3,10" fill="none" stroke="#a8a8a8" stroke-width="1.3" stroke-linejoin="round" stroke-linecap="round"/></svg>
<svg class="a" style="left:0px;top:416px;" width="18" height="18" viewBox="0 0 18 18"><path d="M1.5,3 H10 L15,9 V14 H1.5 Z" fill="none" stroke="#d2d2d2" stroke-width="1.5" stroke-linejoin="round" stroke-linecap="round"/><circle cx="14" cy="14" r="2" fill="#d2d2d2"/></svg>
<div class="a" style="left:37px;top:426px;width:22px;height:21px;background:#d9d9d9;border:1px solid #bdbdbd;"></div>
<div class="a" style="left:23px;top:408px;width:26px;height:25px;background:#4b4746;border:1.5px solid #7fb2d8;"></div>
<svg class="a" style="left:63px;top:416px;" width="18" height="18" viewBox="0 0 18 18"><path d="M2,2 H13 C14,2 15,3 14,9 L9,11 L2,11 Z" fill="#d2d2d2"/><circle cx="11" cy="12" r="2.5" fill="#d2d2d2"/></svg>
<svg class="a" style="left:80px;top:428px;" width="5" height="5" viewBox="0 0 5 5"><path d="M1,5 L5,1 L5,5 Z" fill="#b4b4b4"/></svg>
<svg class="a" style="left:94px;top:417px;" width="12" height="13" viewBox="0 0 12 13"><path d="M2,10 L10,3 M4,8 L6,11 M7,5 L10,8 M1,11 L3,10" fill="none" stroke="#a8a8a8" stroke-width="1.3" stroke-linejoin="round" stroke-linecap="round"/></svg>
<svg class="a" style="left:3px;top:451px;" width="15" height="13" viewBox="0 0 15 13"><rect x="1" y="1" width="9" height="10" fill="none" stroke="#c8c8c8" stroke-width="1.5"/><path d="M3,4 H8 M12,3 V12" stroke="#c8c8c8" stroke-width="1.5"/></svg>
<div class="a" style="left:25px;top:457px;width:9px;height:1.5px;background:#c0c0c0;"></div>
<svg class="a" style="left:42px;top:452px;" width="12" height="12" viewBox="0 0 12 12"><rect x="1" y="1" width="10" height="10" fill="none" stroke="#c8c8c8" stroke-width="1.5"/><path d="M6,1 V11" stroke="#c8c8c8" stroke-width="1.5"/></svg>
<div class="a" style="left:61px;top:457px;width:10px;height:1.5px;background:#c0c0c0;"></div>
<svg class="a" style="left:79px;top:452px;" width="13" height="12" viewBox="0 0 13 12"><rect x="1.5" y="1" width="10" height="9" fill="none" stroke="#c8c8c8" stroke-width="1.6"/><path d="M0,11 H13" stroke="#c8c8c8" stroke-width="1.4"/></svg>
<div class="a" style="left:0px;top:472px;width:109px;height:1px;background:#3a3a3a;"></div>
<div class="a" style="left:0px;top:473px;width:109px;height:20px;background:#3c3c3c;"></div>
<div class="a" style="left:0px;top:473px;width:39px;height:20px;background:#4a4a4a;"></div>
<div class="t" style="left:0.0px;top:478.1px;font-size:10.5px;color:#d0d0d0;transform:scaleX(0.754);transform-origin:0 0;">Gakecios</div>
<svg class="a" style="left:98px;top:480px;" width="8" height="6" viewBox="0 0 8 6"><rect x="0" y="0" width="3" height="3" fill="#9a9a9a"/><rect x="4" y="0" width="3" height="3" fill="#9a9a9a"/><rect x="0" y="3" width="7" height="2" fill="#9a9a9a"/></svg>
<div class="t" style="left:0.0px;top:504.7px;font-size:11.0px;color:#cfcfcf;transform:scaleX(0.736);transform-origin:0 0;">1845</div>
<div class="a" style="left:27px;top:502px;width:14px;height:13px;border:1.5px solid #c8c8c8;"></div>
<div class="t" style="left:30.0px;top:504.4px;font-size:9.0px;color:#cfcfcf;">a</div>
<div class="t" style="left:46.0px;top:503.8px;font-size:12.0px;color:#d4d4d4;transform:scaleX(0.789);transform-origin:0 0;">Celdbeps</div>
<svg class="a" style="left:96px;top:507px;" width="9" height="6" viewBox="0 0 9 6"><path d="M0,0 L9,0 L4.5,5 Z" fill="#c8c8c8"/></svg>
<div class="a" style="left:0px;top:522px;width:106px;height:1px;background:#424242;"></div>
<svg class="a" style="left:8px;top:530px;" width="12" height="12" viewBox="0 0 12 12"><path d="M2,2 C6,0 10,4 9,9 L3,10 Z" fill="#c8c8c8"/><circle cx="11" cy="11" r="1" fill="#c8c8c8"/></svg>
<div class="a" style="left:25px;top:527px;width:38px;height:17px;background:#4a4a4a;border:1px solid #404040;"></div>
<div class="t" style="left:31.0px;top:530.3px;font-size:11.5px;color:#d0d0d0;transform:scaleX(0.969);transform-origin:0 0;">Ens -</div>
<svg class="a" style="left:70px;top:529px;" width="12" height="12" viewBox="0 0 12 12"><path d="M1,2 H11 L2,11 H11 M1,6 H5" fill="none" stroke="#c6c6c6" stroke-width="1.4"/></svg>
<svg class="a" style="left:92px;top:529px;" width="12" height="12" viewBox="0 0 12 12"><rect x="1" y="1" width="10" height="10" fill="none" stroke="#c6c6c6" stroke-width="1.4"/><path d="M1,6 H11 M6,1 V11" stroke="#c6c6c6" stroke-width="1.2"/></svg>
<svg class="a" style="left:0px;top:549px;" width="8" height="10" viewBox="0 0 8 10"><rect x="0" y="1" width="7" height="8" fill="none" stroke="#c0c0c0" stroke-width="1.3"/><path d="M0,5 H7" stroke="#c0c0c0" stroke-width="1.2"/></svg>
<div class="t" style="left:14.0px;top:548.3px;font-size:11.5px;color:#d0d0d0;transform:scaleX(0.764);transform-origin:0 0;">Foo.Rddes</div>
<div class="a" style="left:0px;top:564px;width:106px;height:1px;background:#424242;"></div>
<svg class="a" style="left:0px;top:582px;" width="8" height="8" viewBox="0 0 8 8"><path d="M1,4 L4,1 M2,7 L7,2" stroke="#bbb" stroke-width="1.2"/></svg>
<svg class="a" style="left:15px;top:566px;" width="54" height="50" viewBox="0 0 54 50"><defs><pattern id="ck" width="3" height="3" patternUnits="userSpaceOnUse"><rect width="3" height="3" fill="#e4e4e4"/><rect width="1.5" height="1.5" fill="#bdbdbd"/><rect x="1.5" y="1.5" width="1.5" height="1.5" fill="#c9c9c9"/></pattern></defs><rect x="0.5" y="0.5" width="36" height="34" fill="#eaeaea" stroke="#d8d8d8"/><rect x="3" y="3" width="31" height="29" fill="url(#ck)" stroke="#3a3a3a" stroke-width="0.8"/><rect x="20.5" y="15.5" width="32" height="33" fill="#eaeaea" stroke="#d8d8d8"/><rect x="23" y="18" width="27" height="28" fill="url(#ck)" stroke="#3a3a3a" stroke-width="0.8"/><rect x="15" y="12" width="21" height="20" fill="#2e2e2e"/></svg>
<div class="t" style="left:76.0px;top:581.7px;font-size:11.0px;color:#c8c8c8;transform:scaleX(0.984);transform-origin:0 0;">6н</div>
<svg class="a" style="left:96px;top:581px;" width="10" height="8" viewBox="0 0 10 8"><path d="M1,1 L5,6 L9,1" fill="none" stroke="#c8c8c8" stroke-width="1.6"/></svg>
<div class="a" style="left:0px;top:602px;width:15px;height:1px;background:#424242;"></div>
<div class="a" style="left:70px;top:602px;width:36px;height:1px;background:#424242;"></div>
<div class="a" style="left:0px;top:626px;width:106px;height:1px;background:#424242;"></div>
<svg class="a" style="left:2px;top:634px;" width="14" height="11" viewBox="0 0 14 11"><path d="M1,2 H6 M1,5 H6 M1,8 H6 M8,2 V10 M11,5 V10" stroke="#c8c8c8" stroke-width="1.5"/></svg>
<svg class="a" style="left:25px;top:632px;" width="14" height="14" viewBox="0 0 14 14"><rect x="1" y="1" width="12" height="12" fill="none" stroke="#c0c0c0" stroke-width="1.3" stroke-dasharray="2 1"/><circle cx="7" cy="7" r="2.5" fill="#c8c8c8"/></svg>
<svg class="a" style="left:50px;top:634px;" width="13" height="11" viewBox="0 0 13 11"><rect x="1" y="1" width="11" height="9" fill="none" stroke="#cfcfcf" stroke-width="1.6"/><path d="M4,3 V8 M8,3 V8" stroke="#cfcfcf" stroke-width="1.6"/></svg>
<svg class="a" style="left:96px;top:637px;" width="9" height="6" viewBox="0 0 9 6"><path d="M0,0 L9,0 L4.5,5 Z" fill="#c8c8c8"/></svg>
<div class="a" style="left:0px;top:650px;width:106px;height:1px;background:#424242;"></div>
<svg class="a" style="left:1px;top:656px;" width="13" height="14" viewBox="0 0 13 14"><rect x="1" y="1" width="2.5" height="3" fill="#c8c8c8"/><rect x="1" y="5" width="2.5" height="3" fill="#c8c8c8"/><rect x="1" y="9" width="2.5" height="3" fill="#c8c8c8"/><rect x="5" y="1" width="2.5" height="3" fill="#c8c8c8"/><rect x="5" y="5" width="2.5" height="3" fill="#c8c8c8"/><rect x="5" y="9" width="2.5" height="3" fill="#c8c8c8"/><rect x="9" y="1" width="2.5" height="3" fill="#c8c8c8"/><rect x="9" y="5" width="2.5" height="3" fill="#c8c8c8"/><rect x="9" y="9" width="2.5" height="3" fill="#c8c8c8"/></svg>
<svg class="a" style="left:22px;top:655px;" width="15" height="14" viewBox="0 0 15 14"><path d="M2,13 C1,6 6,1 11,2 C14,3 15,7 13,13 Z" fill="#c4c4c4"/><circle cx="6" cy="10" r="1.8" fill="#4e4e4e"/></svg>
<svg class="a" style="left:46px;top:656px;" width="12" height="14" viewBox="0 0 12 14"><rect x="1" y="1" width="2.5" height="3" fill="#c8c8c8"/><rect x="1" y="5" width="2.5" height="3" fill="#c8c8c8"/><rect x="1" y="9" width="2.5" height="3" fill="#c8c8c8"/><rect x="5" y="1" width="2.5" height="3" fill="#c8c8c8"/><rect x="5" y="5" width="2.5" height="3" fill="#c8c8c8"/><rect x="5" y="9" width="2.5" height="3" fill="#c8c8c8"/><rect x="9" y="1" width="2.5" height="3" fill="#c8c8c8"/><rect x="9" y="5" width="2.5" height="3" fill="#c8c8c8"/><rect x="9" y="9" width="2.5" height="3" fill="#c8c8c8"/></svg>
<svg class="a" style="left:68px;top:656px;" width="15" height="14" viewBox="0 0 15 14"><rect x="-1" y="4.5" width="16" height="5" rx="1.5" transform="rotate(-45 7 7)" fill="none" stroke="#cfcfcf" stroke-width="1.5"/></svg>
<svg class="a" style="left:93px;top:656px;" width="12" height="11" viewBox="0 0 12 11"><rect x="1" y="1" width="3" height="2" fill="#c8c8c8"/><rect x="1" y="5" width="3" height="2" fill="#c8c8c8"/><rect x="5" y="1" width="3" height="2" fill="#c8c8c8"/><rect x="5" y="5" width="3" height="2" fill="#c8c8c8"/><rect x="9" y="1" width="3" height="2" fill="#c8c8c8"/><rect x="9" y="5" width="3" height="2" fill="#c8c8c8"/></svg>
<div class="a" style="left:0px;top:676px;width:106px;height:1px;background:#424242;"></div>
<div class="t" style="left:1.0px;top:681.3px;font-size:11.5px;color:#d0d0d0;transform:scaleX(0.757);transform-origin:0 0;">ERG  Tesdobs</div>
<svg class="a" style="left:4px;top:701px;" width="17" height="16" viewBox="0 0 17 16"><rect x="1.5" y="2" width="12" height="11" fill="none" stroke="#d0d0d0" stroke-width="1.6"/></svg>
<svg class="a" style="left:33px;top:701px;" width="17" height="16" viewBox="0 0 17 16"><rect x="-1" y="5" width="18" height="6" rx="3" transform="rotate(-45 8 8)" fill="none" stroke="#d0d0d0" stroke-width="1.5"/></svg>
<svg class="a" style="left:63px;top:701px;" width="18" height="17" viewBox="0 0 18 17"><path d="M2,1 V15 H10 L16,5 M2,8 H11" fill="none" stroke="#d0d0d0" stroke-width="1.6"/></svg>
<svg class="a" style="left:92px;top:704px;" width="13" height="11" viewBox="0 0 13 11"><rect x="1" y="1" width="11" height="9" fill="none" stroke="#d0d0d0" stroke-width="1.4"/><path d="M1,5 H12 M6,1 V10" stroke="#d0d0d0" stroke-width="1.1"/></svg>
<div class="a" style="left:0px;top:722px;width:106px;height:1px;background:#3e3e3e;"></div>
<div class="a" style="left:0px;top:723px;width:102px;height:22px;background:#565656;"></div>
<svg class="a" style="left:4px;top:726px;" width="14" height="14" viewBox="0 0 14 14"><rect x="1" y="1" width="12" height="12" fill="none" stroke="#cfcfcf" stroke-width="1.5"/></svg>
<div class="t" style="left:24.0px;top:728.8px;font-size:12.0px;color:#d4d4d4;transform:scaleX(0.931);transform-origin:0 0;">Nomod</div>
<div class="a" style="left:0px;top:745px;width:106px;height:1px;background:#474747;"></div>

<div class="a" style="left:922px;top:66px;width:102px;height:12px;background:#3c3c3c;"></div>
<div class="t" style="left:954.0px;top:68.2px;font-size:8.0px;color:#8a8a8a;">≈</div>
<div class="a" style="left:922px;top:66px;width:4px;height:937px;background:#383838;"></div>
<div class="a" style="left:926px;top:78px;width:37px;height:925px;background:#4c4c4c;"></div>
<div class="a" style="left:962px;top:66px;width:2px;height:937px;background:#3a3a3a;"></div>
<div class="a" style="left:926px;top:130px;width:37px;height:1.5px;background:#3e3e3e;"></div>
<div class="a" style="left:926px;top:165px;width:37px;height:1.5px;background:#3e3e3e;"></div>
<div class="a" style="left:926px;top:370px;width:37px;height:1.5px;background:#3e3e3e;"></div>
<div class="a" style="left:926px;top:402px;width:37px;height:1.5px;background:#3e3e3e;"></div>
<div class="a" style="left:926px;top:439px;width:37px;height:1.5px;background:#3e3e3e;"></div>
<div class="a" style="left:926px;top:439px;width:37px;height:564px;background:#4b4b4b;"></div>
<div class="a" style="left:947px;top:88px;width:9px;height:1px;background:#6a6a6a;"></div>
<svg class="a" style="left:934px;top:98px;" width="20" height="20" viewBox="0 0 20 20"><rect x="2" y="3" width="10" height="12" fill="none" stroke="#d0d0d0" stroke-width="1.6"/><path d="M2,8 H12 M15,3 V16 M13,4 L15,3" fill="none" stroke="#d0d0d0" stroke-width="1.6"/><rect x="4" y="9" width="5" height="3" fill="#d0d0d0"/></svg>
<svg class="a" style="left:951px;top:113px;" width="5" height="5" viewBox="0 0 5 5"><path d="M0,5 L5,0 L5,5 Z" fill="#c8c8c8"/></svg>
<svg class="a" style="left:934px;top:142px;" width="20" height="20" viewBox="0 0 20 20"><rect x="4" y="6" width="12" height="11" fill="none" stroke="#d0d0d0" stroke-width="1.6"/><path d="M8,6 V17 M3,2 V8 M1,4 H6" fill="none" stroke="#d0d0d0" stroke-width="1.6"/></svg>
<svg class="a" style="left:951px;top:157px;" width="5" height="5" viewBox="0 0 5 5"><path d="M0,5 L5,0 L5,5 Z" fill="#c8c8c8"/></svg>
<svg class="a" style="left:934px;top:171px;" width="20" height="20" viewBox="0 0 20 20"><rect x="2" y="2" width="10" height="9" fill="none" stroke="#d0d0d0" stroke-width="1.6"/><rect x="7" y="7" width="10" height="9" fill="#4c4c4c" stroke="#d0d0d0" stroke-width="1.6"/><rect x="4" y="4" width="3" height="3" fill="#d0d0d0"/></svg>
<svg class="a" style="left:951px;top:186px;" width="5" height="5" viewBox="0 0 5 5"><path d="M0,5 L5,0 L5,5 Z" fill="#c8c8c8"/></svg>
<svg class="a" style="left:934px;top:200px;" width="20" height="20" viewBox="0 0 20 20"><rect x="2" y="1" width="8" height="7" fill="#d0d0d0"/><rect x="2" y="9" width="10" height="8" fill="#d0d0d0"/><rect x="12" y="10" width="5" height="6" fill="#bdbdbd"/><path d="M3,12 H11" stroke="#4c4c4c" stroke-width="1.5"/></svg>
<svg class="a" style="left:951px;top:215px;" width="5" height="5" viewBox="0 0 5 5"><path d="M0,5 L5,0 L5,5 Z" fill="#c8c8c8"/></svg>
<svg class="a" style="left:934px;top:228px;" width="20" height="20" viewBox="0 0 20 20"><path d="M2,12 C4,6 8,3 12,2 L14,5 C10,7 8,11 7,15 Z" fill="#d0d0d0"/><circle cx="11" cy="12" r="4" fill="#d0d0d0"/><circle cx="10" cy="11" r="2" fill="#4c4c4c"/></svg>
<svg class="a" style="left:951px;top:243px;" width="5" height="5" viewBox="0 0 5 5"><path d="M0,5 L5,0 L5,5 Z" fill="#c8c8c8"/></svg>
<svg class="a" style="left:934px;top:259px;" width="20" height="20" viewBox="0 0 20 20"><rect x="2" y="5" width="9" height="9" fill="none" stroke="#d0d0d0" stroke-width="1.6"/><circle cx="14" cy="3" r="2.5" fill="#d0d0d0"/><circle cx="12" cy="11" r="2" fill="#d0d0d0"/><path d="M11,6 L13,4" fill="none" stroke="#d0d0d0" stroke-width="1.6"/></svg>
<svg class="a" style="left:951px;top:274px;" width="5" height="5" viewBox="0 0 5 5"><path d="M0,5 L5,0 L5,5 Z" fill="#c8c8c8"/></svg>
<svg class="a" style="left:934px;top:287px;" width="20" height="20" viewBox="0 0 20 20"><path d="M2,15 L5,10 L14,2 C16,1 17,3 15,5 L8,12 L2,15 Z" fill="#d0d0d0"/><path d="M6,11 L13,4" stroke="#4c4c4c" stroke-width="1.5"/><path d="M13,8 V16" fill="none" stroke="#d0d0d0" stroke-width="1.6"/></svg>
<svg class="a" style="left:951px;top:302px;" width="5" height="5" viewBox="0 0 5 5"><path d="M0,5 L5,0 L5,5 Z" fill="#c8c8c8"/></svg>
<svg class="a" style="left:934px;top:315px;" width="20" height="20" viewBox="0 0 20 20"><path d="M2,6 C3,2 8,1 12,4 L15,7 C17,10 15,14 11,15 C7,14 6,11 3,10 Z" fill="#d0d0d0"/><circle cx="9" cy="8" r="3" fill="#3c3c3c"/></svg>
<svg class="a" style="left:951px;top:330px;" width="5" height="5" viewBox="0 0 5 5"><path d="M0,5 L5,0 L5,5 Z" fill="#c8c8c8"/></svg>
<svg class="a" style="left:934px;top:342px;" width="20" height="20" viewBox="0 0 20 20"><path d="M2,5 C6,1 14,2 15,8 C16,14 10,16 6,15 C4,14 9,12 10,9 C11,6 6,5 3,8 Z" fill="#d0d0d0"/></svg>
<svg class="a" style="left:951px;top:357px;" width="5" height="5" viewBox="0 0 5 5"><path d="M0,5 L5,0 L5,5 Z" fill="#c8c8c8"/></svg>
<svg class="a" style="left:934px;top:375px;" width="20" height="20" viewBox="0 0 20 20"><rect x="4" y="5" width="12" height="10" fill="none" stroke="#d0d0d0" stroke-width="1.6"/><path d="M2,3 V15 M2,3 H10" fill="none" stroke="#d0d0d0" stroke-width="1.6"/><rect x="6" y="10" width="3" height="3" fill="#d0d0d0"/></svg>
<svg class="a" style="left:951px;top:390px;" width="5" height="5" viewBox="0 0 5 5"><path d="M0,5 L5,0 L5,5 Z" fill="#c8c8c8"/></svg>
<svg class="a" style="left:934px;top:410px;" width="22" height="20" viewBox="0 0 22 20"><rect x="1" y="2" width="6" height="8" fill="#d0d0d0"/><rect x="7" y="10" width="13" height="9" fill="none" stroke="#d0d0d0" stroke-width="1.6"/><path d="M7,3 C10,2 11,5 9,7" fill="none" stroke="#d0d0d0" stroke-width="1.6"/><circle cx="13" cy="7" r="1" fill="#d0d0d0"/></svg>
<div class="a" style="left:964px;top:78px;width:46px;height:30px;background:#4e4e4e;"></div>
<div class="a" style="left:1010px;top:78px;width:14px;height:30px;background:#3f3f3f;"></div>
<div class="t" style="left:972.0px;top:87.3px;font-size:11.5px;color:#d2d2d2;transform:scaleX(0.758);transform-origin:0 0;">Sealoee</div>
<div class="t" style="left:1017.0px;top:87.7px;font-size:11.0px;color:#9a9a9a;">×</div>
<div class="a" style="left:964px;top:108px;width:60px;height:1px;background:#434343;"></div>
<div class="t" style="left:975.0px;top:118.1px;font-size:10.5px;color:#c8c8c8;transform:scaleX(0.832);transform-origin:0 0;">§oo:</div>
<div class="a" style="left:997px;top:113px;width:27px;height:20px;background:#474747;border:1px solid #3e3e3e;"></div>
<div class="t" style="left:1001.0px;top:117.7px;font-size:11.0px;color:#d2d2d2;transform:scaleX(0.784);transform-origin:0 0;">sbooc</div>
<div class="a" style="left:964px;top:137px;width:60px;height:1px;background:#434343;"></div>
<div class="t" style="left:972.0px;top:145.7px;font-size:11.0px;color:#d2d2d2;transform:scaleX(0.834);transform-origin:0 0;">Elbels</div>
<div class="a" style="left:1003px;top:141px;width:21px;height:20px;background:#474747;border:1px solid #3e3e3e;"></div>
<div class="t" style="left:1006.0px;top:145.7px;font-size:11.0px;color:#d2d2d2;transform:scaleX(0.920);transform-origin:0 0;">Soo</div>
<div class="a" style="left:964px;top:163px;width:60px;height:1px;background:#434343;"></div>
<svg class="a" style="left:971px;top:166px;" width="11" height="11" viewBox="0 0 11 11"><path d="M1,10 L5.5,1 L10,10 Z" fill="none" stroke="#d0d0d0" stroke-width="1.5"/><circle cx="5.5" cy="7" r="1.5" fill="#d0d0d0"/></svg>
<div class="a" style="left:985px;top:164px;width:39px;height:20px;background:#676b6e;box-shadow:inset 1px 1px 0 #777"></div>
<div class="t" style="left:1001.0px;top:168.7px;font-size:11.0px;color:#e2e2e2;transform:scaleX(0.757);transform-origin:0 0;">Besolc</div>
<div class="a" style="left:964px;top:185px;width:60px;height:1px;background:#434343;"></div>
<svg class="a" style="left:973px;top:189px;" width="11" height="11" viewBox="0 0 11 11"><rect x="1" y="1" width="9" height="9" fill="none" stroke="#d0d0d0" stroke-width="1.4"/><path d="M3,7 L8,3 M4,3 H8" stroke="#d0d0d0" stroke-width="1.2"/></svg>
<div class="t" style="left:989.0px;top:189.7px;font-size:11.0px;color:#d2d2d2;transform:scaleX(0.896);transform-origin:0 0;">Fcdt to is</div>
<div class="a" style="left:964px;top:206px;width:60px;height:1px;background:#434343;"></div>
<div class="t" style="left:972.0px;top:210.7px;font-size:11.0px;color:#d2d2d2;transform:scaleX(0.857);transform-origin:0 0;">Floedo  Fhos</div>
<div class="a" style="left:964px;top:227px;width:60px;height:1px;background:#434343;"></div>
<div class="t" style="left:972.0px;top:231.7px;font-size:11.0px;color:#d2d2d2;transform:scaleX(0.874);transform-origin:0 0;">Flobes  Flots</div>
<div class="a" style="left:964px;top:249px;width:60px;height:1px;background:#434343;"></div>
<div class="a" style="left:997px;top:251px;width:27px;height:18px;background:#474747;border:1px solid #3e3e3e;"></div>
<div class="t" style="left:1008.0px;top:255.7px;font-size:11.0px;color:#d2d2d2;transform:scaleX(0.793);transform-origin:0 0;">Rob</div>
<div class="a" style="left:964px;top:270px;width:60px;height:1px;background:#434343;"></div>
<svg class="a" style="left:971px;top:276px;" width="11" height="11" viewBox="0 0 11 11"><rect x="1" y="1" width="9" height="9" fill="none" stroke="#d0d0d0" stroke-width="1.4"/><path d="M4,2 V9 M7,2 V9 M1,5 H10" stroke="#d0d0d0" stroke-width="1.1"/></svg>
<div class="t" style="left:986.0px;top:275.7px;font-size:11.0px;color:#d2d2d2;transform:scaleX(0.828);transform-origin:0 0;">Econdces</div>
<svg class="a" style="left:971px;top:296px;" width="11" height="11" viewBox="0 0 11 11"><rect x="1" y="1" width="9" height="9" fill="#d0d0d0"/><path d="M3,4 H8 M3,6 H8" stroke="#4e4e4e" stroke-width="1"/></svg>
<div class="t" style="left:987.0px;top:296.7px;font-size:11.0px;color:#d2d2d2;transform:scaleX(0.852);transform-origin:0 0;">Soudbes</div>
<div class="a" style="left:964px;top:361px;width:60px;height:1px;background:#434343;"></div>
<div class="t" style="left:975.0px;top:370.7px;font-size:11.0px;color:#d2d2d2;transform:scaleX(0.862);transform-origin:0 0;">Atolott  Bo:.</div>
<div class="a" style="left:964px;top:389px;width:60px;height:1px;background:#434343;"></div>
<svg class="a" style="left:976px;top:394px;" width="18" height="16" viewBox="0 0 18 16"><rect x="1" y="6" width="6" height="9" fill="#d0d0d0"/><path d="M9,1 V15 M12,3 L15,6" stroke="#d0d0d0" stroke-width="1.5"/></svg>
<div class="t" style="left:1001.0px;top:397.7px;font-size:11.0px;color:#d2d2d2;transform:scaleX(0.757);transform-origin:0 0;">Graaid</div>
<div class="a" style="left:964px;top:417px;width:60px;height:1px;background:#434343;"></div>
<div class="t" style="left:972.0px;top:425.7px;font-size:11.0px;color:#d2d2d2;transform:scaleX(0.792);transform-origin:0 0;">Fleiopte</div>
<div class="a" style="left:1013px;top:420px;width:11px;height:20px;background:#474747;border:1px solid #3e3e3e;"></div>
<div class="a" style="left:964px;top:444px;width:60px;height:1px;background:#434343;"></div>
<svg class="a" style="left:971px;top:452px;" width="9" height="9" viewBox="0 0 9 9"><path d="M1,8 L8,1" stroke="#d0d0d0" stroke-width="1.8"/></svg>
<div class="t" style="left:984.0px;top:452.7px;font-size:11.0px;color:#d2d2d2;transform:scaleX(0.862);transform-origin:0 0;">Sbools</div>
<div class="a" style="left:1014px;top:448px;width:10px;height:20px;background:#474747;border:1px solid #3e3e3e;"></div>
<div class="a" style="left:964px;top:471px;width:60px;height:1px;background:#434343;"></div>
<div class="t" style="left:972.0px;top:479.7px;font-size:11.0px;color:#d2d2d2;transform:scaleX(0.954);transform-origin:0 0;">Dcasite</div>
<div class="a" style="left:1013px;top:474px;width:11px;height:22px;background:#474747;border:1px solid #3e3e3e;"></div>
<div class="a" style="left:964px;top:498px;width:60px;height:1px;background:#434343;"></div>
<div class="t" style="left:972.0px;top:506.7px;font-size:11.0px;color:#d2d2d2;transform:scaleX(0.905);transform-origin:0 0;">Staods</div>
<div class="a" style="left:1005px;top:502px;width:19px;height:20px;background:#474747;border:1px solid #3e3e3e;"></div>
<div class="t" style="left:1008.0px;top:506.4px;font-size:9.0px;color:#d2d2d2;transform:scaleX(1.199);transform-origin:0 0;">ea</div>
<div class="t" style="left:971.0px;top:533.1px;font-size:10.5px;color:#d2d2d2;transform:scaleX(0.979);transform-origin:0 0;">K28€</div>
<div class="a" style="left:1000px;top:538px;width:9px;height:1.5px;background:#bbbbbb;"></div>
<div class="a" style="left:1015px;top:532px;width:9px;height:12px;border:1.4px solid #c8c8c8;"></div>
<div class="a" style="left:964px;top:548px;width:60px;height:1px;background:#434343;"></div>
<div class="a" style="left:964px;top:573px;width:60px;height:21px;background:#3b3b3b;"></div>
<div class="a" style="left:999px;top:574px;width:25px;height:20px;background:#474747;"></div>
<div class="t" style="left:1002.0px;top:580.1px;font-size:10.5px;color:#d2d2d2;transform:scaleX(0.803);transform-origin:0 0;">Wfrse</div>
<svg class="a" style="left:971px;top:604px;" width="11" height="10" viewBox="0 0 11 10"><path d="M1,1 H10 L9,9 H1 Z M1,3 H10" fill="none" stroke="#d0d0d0" stroke-width="1.4"/></svg>
<div class="t" style="left:991.0px;top:603.7px;font-size:11.0px;color:#d2d2d2;transform:scaleX(0.915);transform-origin:0 0;">Geedfa</div>
<div class="a" style="left:964px;top:622px;width:60px;height:1px;background:#434343;"></div>
<svg class="a" style="left:1001px;top:629px;" width="7" height="6" viewBox="0 0 7 6"><path d="M0,0 L6,3 L0,6 Z" fill="#bbb"/></svg>
<div class="a" style="left:1011px;top:627px;width:7px;height:11px;border:1.3px solid #cfcfcf;border-radius:2px;"></div>
<div class="a" style="left:964px;top:643px;width:60px;height:1px;background:#434343;"></div>
<svg class="a" style="left:979px;top:646px;" width="26" height="20" viewBox="0 0 26 20"><defs><pattern id="ck2" width="3" height="3" patternUnits="userSpaceOnUse"><rect width="3" height="3" fill="#e6e6e6"/><rect width="1.5" height="1.5" fill="#c4c4c4"/></pattern></defs><rect x="1" y="1" width="24" height="18" fill="url(#ck2)" stroke="#262626" stroke-width="1.4" rx="1"/></svg>
<div class="t" style="left:1010.0px;top:650.7px;font-size:11.0px;color:#d2d2d2;transform:scaleX(0.790);transform-origin:0 0;">Om</div>
<div class="a" style="left:964px;top:667px;width:60px;height:1px;background:#434343;"></div>
<svg class="a" style="left:979px;top:668px;" width="26" height="20" viewBox="0 0 26 20"><rect x="1" y="1" width="24" height="18" fill="url(#ck2)" stroke="#262626" stroke-width="1.4" rx="1"/></svg>
<div class="t" style="left:1010.0px;top:672.7px;font-size:11.0px;color:#d2d2d2;transform:scaleX(0.954);transform-origin:0 0;">Oo</div>
<div class="a" style="left:964px;top:689px;width:60px;height:1px;background:#434343;"></div>
<svg class="a" style="left:979px;top:690px;" width="26" height="20" viewBox="0 0 26 20"><rect x="1" y="1" width="24" height="18" fill="url(#ck2)" stroke="#262626" stroke-width="1.4" rx="1"/></svg>
<div class="t" style="left:1010.0px;top:694.7px;font-size:11.0px;color:#d2d2d2;transform:scaleX(0.954);transform-origin:0 0;">Oo</div>
<div class="a" style="left:964px;top:711px;width:60px;height:1px;background:#434343;"></div>
<svg class="a" style="left:979px;top:712px;" width="26" height="20" viewBox="0 0 26 20"><rect x="1" y="1" width="24" height="18" fill="url(#ck2)" stroke="#262626" stroke-width="1.4" rx="1"/></svg>
<div class="t" style="left:1010.0px;top:716.7px;font-size:11.0px;color:#d2d2d2;transform:scaleX(0.790);transform-origin:0 0;">Om</div>
<div class="a" style="left:964px;top:733px;width:60px;height:1px;background:#434343;"></div>
<div class="a" style="left:964px;top:980px;width:60px;height:1px;background:#404040;"></div>
<svg class="a" style="left:987px;top:985px;" width="13" height="12" viewBox="0 0 13 12"><rect x="1" y="1" width="11" height="10" fill="none" stroke="#cfcfcf" stroke-width="1.3"/><path d="M1,4 H12 M1,7 H12" stroke="#cfcfcf" stroke-width="1.2"/></svg>
<svg class="a" style="left:1009px;top:985px;" width="12" height="12" viewBox="0 0 12 12"><rect x="1" y="1" width="10" height="10" fill="none" stroke="#cfcfcf" stroke-width="1.4" rx="1"/></svg>
<svg class="a" style="left:909px;top:100px;" width="10" height="10" viewBox="0 0 10 10"><circle cx="5" cy="5" r="3.5" fill="#9a9a9a"/></svg>
<svg class="a" style="left:909px;top:974px;" width="10" height="10" viewBox="0 0 10 10"><circle cx="5" cy="5" r="3.5" fill="#9a9a9a"/></svg>

<svg class="a" style="left:115px;top:991px;" width="10" height="10" viewBox="0 0 10 10"><circle cx="5" cy="5" r="3.5" fill="#8e8e8e"/></svg>
<svg class="a" style="left:131px;top:991px;" width="10" height="10" viewBox="0 0 10 10"><circle cx="5" cy="5" r="3.5" fill="#8e8e8e"/></svg>
<div class="a" style="left:140px;top:989px;width:1px;height:13px;background:#353535;"></div>
<svg class="a" style="left:893px;top:991px;" width="10" height="10" viewBox="0 0 10 10"><circle cx="5" cy="5" r="3.5" fill="#9a9a9a"/></svg>
<div class="a" style="left:49px;top:1004px;width:1px;height:20px;background:#3c3c3c;"></div>
<div class="a" style="left:110px;top:1004px;width:1px;height:20px;background:#3c3c3c;"></div>
<div class="a" style="left:213px;top:1004px;width:1px;height:20px;background:#3c3c3c;"></div>
<div class="a" style="left:316px;top:1004px;width:1px;height:20px;background:#3c3c3c;"></div>
<div class="a" style="left:426px;top:1004px;width:1px;height:20px;background:#3c3c3c;"></div>
<div class="a" style="left:434px;top:1004px;width:1px;height:20px;background:#3c3c3c;"></div>
<div class="t" style="left:0.0px;top:1012.5px;font-size:10.0px;color:#bdbdbd;transform:scaleX(0.933);transform-origin:0 0;">ᵻ ₯</div>
<div class="t" style="left:18.0px;top:1010.8px;font-size:12.0px;color:#d4d4d4;transform:scaleX(0.721);transform-origin:0 0;">Doebs</div>
<svg class="a" style="left:56px;top:1008px;" width="14" height="14" viewBox="0 0 14 14"><circle cx="5" cy="6" r="4.5" fill="#c8c8c8"/><path d="M9,2 L13,6 L10,12" fill="none" stroke="#c8c8c8" stroke-width="1.5"/><path d="M3,5 H7" stroke="#4a4a4a"/></svg>
<svg class="a" style="left:94px;top:1011px;" width="11" height="7" viewBox="0 0 11 7"><path d="M1,6 L5.5,1 L10,6" fill="none" stroke="#c8c8c8" stroke-width="1.5"/></svg>
<svg class="a" style="left:120px;top:1008px;" width="13" height="14" viewBox="0 0 13 14"><path d="M2,12 C1,8 4,4 6,6 C8,8 4,11 8,12 L11,12 M5,2 L7,5" fill="none" stroke="#cfcfcf" stroke-width="1.4"/></svg>
<div class="t" style="left:138.0px;top:1010.8px;font-size:12.0px;color:#d4d4d4;transform:scaleX(0.842);transform-origin:0 0;">Alotle  Otretds</div>
<svg class="a" style="left:221px;top:1007px;" width="16" height="16" viewBox="0 0 16 16"><path d="M2,15 L4,10 L12,2 L14,4 L6,12 Z" fill="#cfcfcf"/><path d="M11,1 L15,5" stroke="#cfcfcf" stroke-width="1.5"/></svg>
<div class="t" style="left:243.0px;top:1010.8px;font-size:12.0px;color:#d4d4d4;transform:scaleX(0.880);transform-origin:0 0;">Car  Etds</div>
<svg class="a" style="left:292px;top:1008px;" width="11" height="11" viewBox="0 0 11 11"><rect x="1" y="1" width="9" height="9" fill="none" stroke="#c8c8c8" stroke-width="1.4"/><path d="M1,5 H10 M5,1 V10" stroke="#c8c8c8" stroke-width="1.2"/></svg>
<svg class="a" style="left:328px;top:1011px;" width="10" height="10" viewBox="0 0 10 10"><circle cx="5" cy="5" r="4.5" fill="#d4d4d4"/></svg>
<svg class="a" style="left:446px;top:1010px;" width="13" height="13" viewBox="0 0 13 13"><rect x="1" y="1" width="11" height="11" fill="none" stroke="#c8c8c8" stroke-width="1.4"/><path d="M3,4 H10 M3,7 H10 M6,4 V11" stroke="#c8c8c8" stroke-width="1.2"/></svg>
<svg class="a" style="left:471px;top:1010px;" width="13" height="13" viewBox="0 0 13 13"><path d="M1,12 H11 M2,10 L10,2 L12,4 L4,11 Z" fill="#c8c8c8"/></svg>
<svg class="a" style="left:494px;top:1010px;" width="13" height="13" viewBox="0 0 13 13"><path d="M2,12 V5 L4,2 L5,5 H8 L9,2 L11,5 V12 Z" fill="none" stroke="#c8c8c8" stroke-width="1.4"/></svg>
<svg class="a" style="left:516px;top:1010px;" width="13" height="13" viewBox="0 0 13 13"><path d="M1,4 H12 M2,7 H11 M3,10 H10 M6,2 V12" stroke="#c8c8c8" stroke-width="1.3"/></svg>
<svg class="a" style="left:541px;top:1010px;" width="13" height="13" viewBox="0 0 13 13"><rect x="1" y="1" width="11" height="11" fill="none" stroke="#c8c8c8" stroke-width="1.4"/><path d="M4,6 H9 M6.5,3 V9" stroke="#c8c8c8" stroke-width="1.2"/></svg>

</body></html>
